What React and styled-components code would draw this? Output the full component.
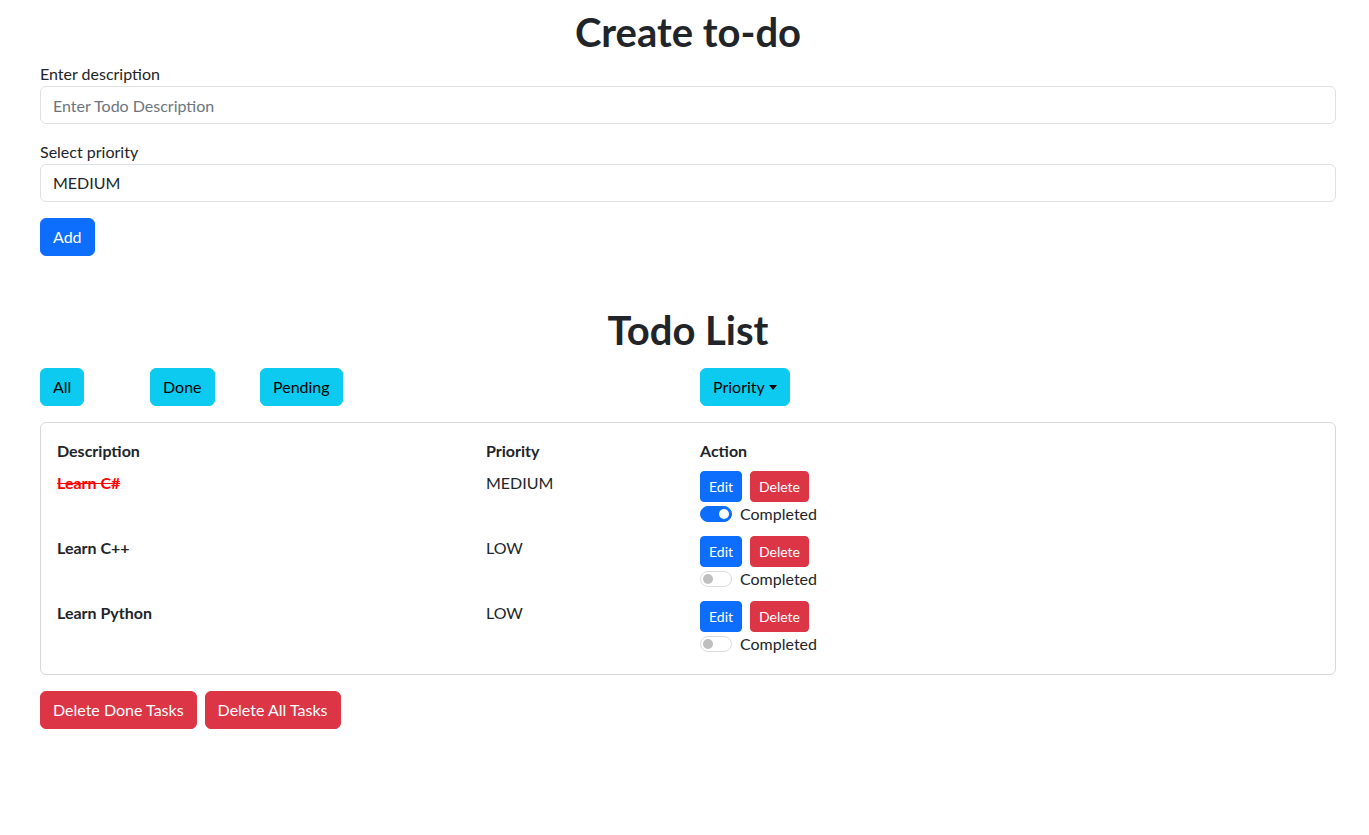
import React from "react";
import styled, { createGlobalStyle, css } from "styled-components";

const GlobalStyle = createGlobalStyle`
  body {
    margin: 0;
    background: #fff;
    color: #212529;
    font-family: Lato, "Noto Sans", sans-serif;
    font-size: 16px;
    line-height: 1.5;
  }
`;

const Container = styled.div`
  width: 1296px;
  margin-left: 40px;
  padding-top: 8px;
`;

const Title = styled.h1`
  margin: 0 0 ${(p) => p.$mb || 6}px;
  margin-top: ${(p) => p.$mt || 0}px;
  font-size: 40px;
  font-weight: 700;
  line-height: 48px;
  text-align: center;
`;

const Field = styled.div`
  margin-bottom: 16px;
`;

const Label = styled.label`
  display: block;
  line-height: 24px;
`;

const inputStyle = css`
  display: block;
  box-sizing: border-box;
  width: 100%;
  height: 38px;
  padding: 6px 12px;
  font: inherit;
  color: #212529;
  background: #fff;
  border: 1px solid #dee2e6;
  border-radius: 6px;
  outline: none;
`;

const Input = styled.input`
  ${inputStyle};
  &::placeholder {
    color: #6c757d;
  }
`;

const Select = styled.select`
  ${inputStyle};
  appearance: none;
`;

const variants = {
  primary: { bg: "#0d6efd", fg: "#fff" },
  danger: { bg: "#dc3545", fg: "#fff" },
  info: { bg: "#0dcaf0", fg: "#000" },
};

const Button = styled.button`
  display: inline-flex;
  align-items: center;
  box-sizing: border-box;
  height: ${(p) => (p.$sm ? 31 : 38)}px;
  padding: ${(p) => (p.$sm ? "0 8px" : "0 12px")};
  font: inherit;
  font-size: ${(p) => (p.$sm ? 14 : 16)}px;
  color: ${(p) => variants[p.$variant].fg};
  background: ${(p) => variants[p.$variant].bg};
  border: 1px solid ${(p) => variants[p.$variant].bg};
  border-radius: ${(p) => (p.$sm ? 4 : 6)}px;
  cursor: pointer;
`;

const Caret = styled.span`
  display: inline-block;
  margin-left: 4px;
  border-top: 5px solid currentColor;
  border-left: 4.5px solid transparent;
  border-right: 4.5px solid transparent;
`;

const FilterRow = styled.div`
  display: grid;
  grid-template-columns: 110px 110px 440px auto;
  margin: 14px 0 16px;
  justify-items: start;
`;

const TableBox = styled.div`
  border: 1px solid #d6d8db;
  border-radius: 6px;
  padding: 12px;
`;

const Table = styled.table`
  width: 100%;
  border-collapse: collapse;
`;

const Th = styled.th`
  padding: 4px;
  text-align: left;
  font-weight: 700;
  vertical-align: top;
`;

const Td = styled.td`
  padding: 4px;
  vertical-align: top;
  line-height: 24px;
`;

const Desc = styled.span`
  font-weight: 700;
  ${(p) =>
    p.$done &&
    css`
      color: #ff0000;
      text-decoration: line-through;
    `}
`;

const ActionButtons = styled.div`
  display: flex;
  gap: 8px;
`;

const Check = styled.label`
  display: flex;
  align-items: center;
  gap: 8px;
  min-height: 24px;
  margin-bottom: 2px;
`;

const Switch = styled.span`
  position: relative;
  box-sizing: border-box;
  width: 32px;
  height: 16px;
  border-radius: 8px;
  border: 1px solid ${(p) => (p.$on ? "#0d6efd" : "#dcdcdc")};
  background: ${(p) => (p.$on ? "#0d6efd" : "#fff")};

  &::after {
    content: "";
    position: absolute;
    top: 2px;
    left: ${(p) => (p.$on ? "18px" : "2px")};
    width: 10px;
    height: 10px;
    border-radius: 50%;
    background: ${(p) => (p.$on ? "#fff" : "#bfbfbf")};
  }
`;

const BottomRow = styled.div`
  display: flex;
  gap: 8px;
  margin-top: 16px;
`;

const todos = [
  { id: 1, name: "Learn C#", priority: "MEDIUM", done: true },
  { id: 2, name: "Learn C++", priority: "LOW", done: false },
  { id: 3, name: "Learn Python", priority: "LOW", done: false },
];

export default function App() {
  return (
    <>
      <GlobalStyle />
      <Container>
        <Title>Create to-do</Title>
        <Field>
          <Label>Enter description</Label>
          <Input placeholder="Enter Todo Description" />
        </Field>
        <Field>
          <Label>Select priority</Label>
          <Select defaultValue="MEDIUM">
            <option>LOW</option>
            <option>MEDIUM</option>
            <option>HIGH</option>
          </Select>
        </Field>
        <Button $variant="primary">Add</Button>

        <Title $mt={50}>Todo List</Title>
        <FilterRow>
          <Button $variant="info">All</Button>
          <Button $variant="info">Done</Button>
          <Button $variant="info">Pending</Button>
          <Button $variant="info">
            Priority
            <Caret />
          </Button>
        </FilterRow>

        <TableBox>
          <Table>
            <colgroup>
              <col style={{ width: 429 }} />
              <col style={{ width: 214 }} />
              <col />
            </colgroup>
            <thead>
              <tr>
                <Th>Description</Th>
                <Th>Priority</Th>
                <Th>Action</Th>
              </tr>
            </thead>
            <tbody>
              {todos.map((t) => (
                <tr key={t.id}>
                  <Td>
                    <Desc $done={t.done}>{t.name}</Desc>
                  </Td>
                  <Td>{t.priority}</Td>
                  <Td>
                    <ActionButtons>
                      <Button $sm $variant="primary">Edit</Button>
                      <Button $sm $variant="danger">Delete</Button>
                    </ActionButtons>
                    <Check>
                      <Switch $on={t.done} />
                      Completed
                    </Check>
                  </Td>
                </tr>
              ))}
            </tbody>
          </Table>
        </TableBox>

        <BottomRow>
          <Button $variant="danger">Delete Done Tasks</Button>
          <Button $variant="danger">Delete All Tasks</Button>
        </BottomRow>
      </Container>
    </>
  );
}
